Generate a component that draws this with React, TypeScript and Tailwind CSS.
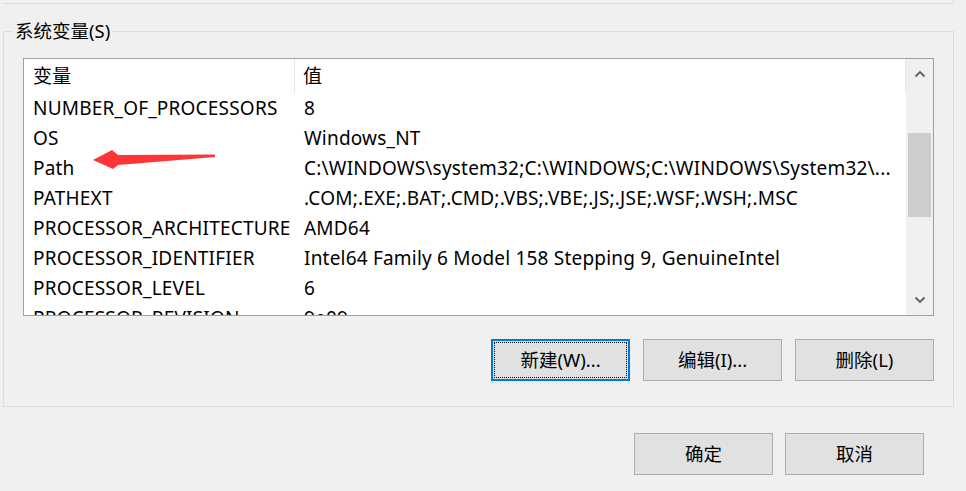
import React from 'react';

const FONT = { fontFamily: '"Noto Sans", "Noto Sans CJK SC", sans-serif' };

const rows: [string, string][] = [
  ['NUMBER_OF_PROCESSORS', '8'],
  ['OS', 'Windows_NT'],
  ['Path', 'C:\\WINDOWS\\system32;C:\\WINDOWS;C:\\WINDOWS\\System32\\...'],
  ['PATHEXT', '.COM;.EXE;.BAT;.CMD;.VBS;.VBE;.JS;.JSE;.WSF;.WSH;.MSC'],
  ['PROCESSOR_ARCHITECTURE', 'AMD64'],
  ['PROCESSOR_IDENTIFIER', 'Intel64 Family 6 Model 158 Stepping 9, GenuineIntel'],
  ['PROCESSOR_LEVEL', '6'],
  ['PROCESSOR_REVISION', '9e09'],
];

function WinButton({ label, primary }: { label: string; primary?: boolean }) {
  return (
    <button
      className={
        'w-[139px] h-[42px] bg-[#e1e1e1] text-black text-[18.5px] leading-none flex items-center justify-center ' +
        (primary
          ? 'border-2 border-[#0078d7] outline-1 outline-dotted outline-black -outline-offset-4'
          : 'border border-[#adadad]')
      }
    >
      {label}
    </button>
  );
}

function Chevron({ up }: { up?: boolean }) {
  return (
    <svg width="12" height="8" viewBox="0 0 12 8">
      <path
        d={up ? 'M1.5 6.5 L6 2 L10.5 6.5' : 'M1.5 1.5 L6 6 L10.5 1.5'}
        fill="none"
        stroke="#606060"
        strokeWidth="1.8"
      />
    </svg>
  );
}

export default function App() {
  return (
    <div className="relative w-[966px] h-[491px] bg-[#f0f0f0] overflow-hidden text-black" style={FONT}>
      {/* tail of the user variables group above */}
      <div className="ml-[3px] w-[951px] h-[4px] border-r border-b border-[#dcdcdc]" />

      {/* system variables group */}
      <div className="ml-[3px] mt-[27px] w-[951px] border border-[#dcdcdc] pl-[19px] pr-[19px] pb-[25px] flex flex-col">
        <div className="-mt-[14px] -ml-[10px] px-[2px] w-fit h-[26px] leading-[26px] text-[18.5px] bg-[#f0f0f0]">
          系统变量(S)
        </div>

        {/* list view */}
        <div className="mt-[14px] h-[258px] border border-[#a0a0a0] bg-white flex">
          <div className="flex-1 flex flex-col overflow-hidden text-[19px] tracking-[0.2px]">
            <div className="h-[34px] flex items-center border-r border-[#e8e8e8] shrink-0">
              <div className="w-[271px] pl-[9px] h-full flex items-center border-r border-[#e5e5e5]">变量</div>
              <div className="pl-[8px]">值</div>
            </div>
            {rows.map(([k, v]) => (
              <div key={k} className="h-[30px] shrink-0 flex items-center whitespace-nowrap">
                <div className="w-[272px] pl-[9px]">{k}</div>
                <div className="pl-[8px]">{v}</div>
              </div>
            ))}
          </div>
          {/* scrollbar */}
          <div className="w-[27px] bg-[#f0f0f0] flex flex-col items-center">
            <div className="h-[28px] w-full flex items-center justify-center pt-[2px]">
              <Chevron up />
            </div>
            <div className="flex-1 w-full px-[2px] pt-[46px]">
              <div className="h-[84px] bg-[#cdcdcd]" />
            </div>
            <div className="h-[28px] w-full flex items-center justify-center pb-[2px]">
              <Chevron />
            </div>
          </div>
        </div>

        <div className="mt-[23px] flex justify-end gap-[13px]">
          <WinButton label="新建(W)..." primary />
          <WinButton label="编辑(I)..." />
          <WinButton label="删除(L)" />
        </div>
      </div>

      <div className="mt-[26px] pr-[42px] flex justify-end gap-[12px]">
        <WinButton label="确定" />
        <WinButton label="取消" />
      </div>

      {/* red arrow annotation */}
      <svg className="absolute left-[90px] top-[148px]" width="130" height="24" viewBox="0 0 130 24">
        <path d="M3 12 L22 2 L28 7 L125 6.5 L125 9 L28 17 L23 21 Z" fill="#ff3535" />
      </svg>
    </div>
  );
}
